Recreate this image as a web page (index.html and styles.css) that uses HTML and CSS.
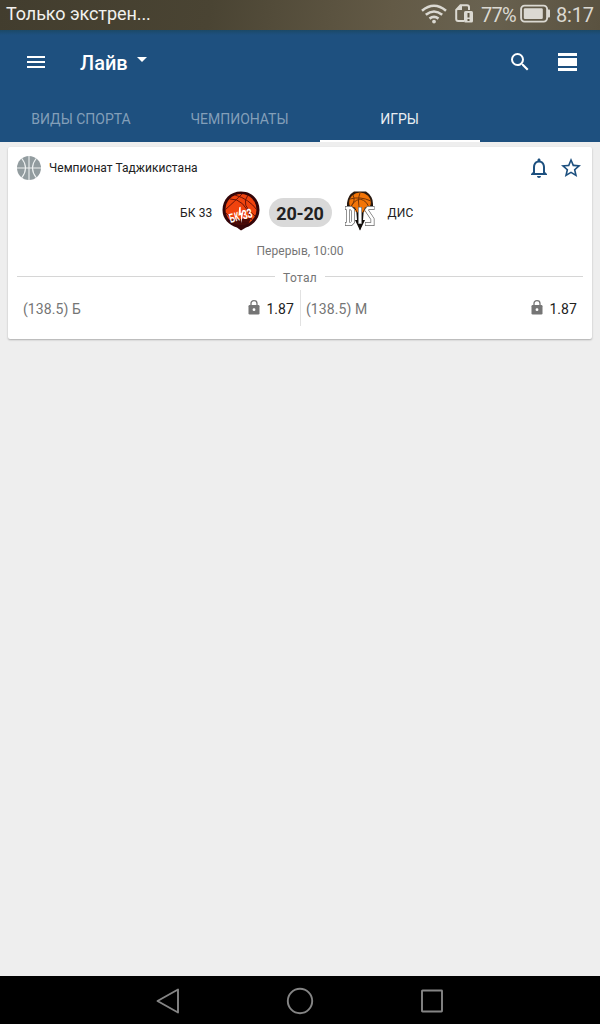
FILE: index.html
```html
<!DOCTYPE html>
<html lang="ru">
<head>
<meta charset="utf-8">
<title>Лайв</title>
<link rel="stylesheet" href="styles.css">
</head>
<body>
<div class="status">
  <span class="carrier">Только экстрен...</span>
  <svg class="wifi" width="26" height="20" viewBox="0 0 26 20" fill="none" stroke="#dbd9d2" stroke-width="2.6"><path d="M1 6.700Q13-3.200 25 6.700M4.800 10.800Q13 4.200 21.200 10.800M8.500 14.600Q13 11.200 17.500 14.600"/><circle cx="13" cy="17.600" r="1.900" fill="#dbd9d2" stroke="none"/></svg>
  <svg class="sim" width="19" height="20" viewBox="0 0 19 20"><path d="M9 17H3.200Q1.200 17 1.200 15V6L5.500 1.200H12Q14 1.200 14 3.200V6" fill="none" stroke="#dbd9d2" stroke-width="2"/><path d="M1.500 5.500L5 1.500H7V6H1.500Z" fill="#dbd9d2"/><rect x="9" y="7" width="9" height="11.500" rx="1.500" fill="#dbd9d2"/><path d="M13.500 9V13.500M13.500 15V17" stroke="#5e5643" stroke-width="2"/></svg>
  <span class="percent">77%</span>
  <svg class="battery" width="31" height="20" viewBox="0 0 31 20"><rect x="1.100" y="1.600" width="26" height="16" rx="3.500" fill="none" stroke="#dbd9d2" stroke-width="1.900"/><rect x="3.800" y="4.200" width="19" height="10.800" rx="1.200" fill="#dbd9d2"/><path d="M28 5.500H29.200Q30 5.500 30 6.500V12.500Q30 13.500 29.200 13.500H28Z" fill="#dbd9d2"/></svg>
  <span class="clock">8:17</span>
</div>
<header class="appbar">
  <div class="toolbar">
    <svg width="18" height="12" viewBox="0 0 18 12" fill="#fff"><path d="M0 0H18V2H0ZM0 5H18V7H0ZM0 10H18V12H0Z"/></svg>
    <h1 class="title">Лайв</h1>
    <svg class="caret" width="10" height="5" viewBox="0 0 10 5"><path d="M0 0H10L5 5Z" fill="#fff"/></svg>
    <svg class="search" width="24" height="24" viewBox="0 0 24 24" fill="#fff"><path d="M15.500 14h-.79l-.28-.27A6.471 6.471 0 0 0 16 9.500 6.500 6.500 0 1 0 9.500 16c1.610 0 3.090-.59 4.230-1.570l.27.28v.79l5 4.990L20.490 19l-4.990-5zm-6 0C7.010 14 5 11.990 5 9.500S7.010 5 9.500 5 14 7.010 14 9.500 11.990 14 9.500 14z"/></svg>
    <svg class="view" width="19" height="18" viewBox="0 0 19 18" fill="#fff"><path d="M0 0H19V3H0ZM0 5H19V13H0ZM0 15H19V18H0Z"/></svg>
  </div>
  <nav class="tabs">
    <span class="tab sports">ВИДЫ СПОРТА</span>
    <span class="tab champs">ЧЕМПИОНАТЫ</span>
    <span class="tab active">ИГРЫ</span>
  </nav>
</header>
<main class="content">
  <article class="card">
    <div class="league">
      <svg width="24" height="24" viewBox="0 0 24 24"><circle cx="12" cy="12" r="12" fill="#929c9f"/><path d="M12 0V24M0 12H24M4.500 2Q12.500 12 4.500 22M19.500 2Q11.500 12 19.500 22" fill="none" stroke="#edf0f0" stroke-width="1.100"/></svg>
      <span class="league-name">Чемпионат Таджикистана</span>
      <svg class="bell" width="24" height="24" viewBox="0 0 24 24" fill="#1d507f"><path d="M12 22c1.100 0 2-.9 2-2h-4c0 1.100.9 2 2 2zm6-6v-5c0-3.070-1.630-5.640-4.500-6.320V4c0-.83-.67-1.500-1.500-1.500s-1.500.67-1.500 1.500v.68C7.640 5.360 6 7.920 6 11v5l-2 2v1h16v-1l-2-2zm-2 1H8v-6c0-2.480 1.510-4.500 4-4.500s4 2.020 4 4.500v6z"/></svg>
      <svg width="24" height="24" viewBox="0 0 24 24" fill="#1d507f"><path d="M22 9.240l-7.190-.62L12 2 9.190 8.630 2 9.240l5.460 4.730L5.820 21 12 17.270 18.180 21l-1.630-7.030L22 9.240zM12 15.400l-3.760 2.270 1-4.280-3.320-2.880 4.380-.38L12 6.100l1.710 4.040 4.380.38-3.320 2.880 1 4.280L12 15.400z"/></svg>
    </div>
    <div class="match">
      <span class="team home">БК 33</span>
      <svg class="logo" width="40" height="40" viewBox="0 0 40 40">
        <path d="M20 .5C31 .5 38.500 8.500 38.500 19C38.500 28 32 34 25 36.500L20 39.500L16 36.500C8 34 1.500 28 1.500 19C1.500 8.500 9 .5 20 .5Z" fill="#330508"/>
        <circle cx="20" cy="18.500" r="15.500" fill="#f0430e"/>
        <path d="M9 8Q23 7 31 29M21 3Q15 9 4 19M14 4Q28 8 36 19M27 4Q19 14 34 25M5 22Q13 33 28 32" fill="none" stroke="#6b1408" stroke-width="1"/>
        <path d="M7 29L30 27Q29 32 24 35L20 39L15 35Q9 33 7 29Z" fill="#3b0708" opacity=".9"/>
        <g transform="translate(9.500 32) rotate(-15)"><text class="logo-text" x="0" y="0" textLength="10" lengthAdjust="spacingAndGlyphs">БК</text><text class="logo-text" x="13.500" y="0" textLength="10" lengthAdjust="spacingAndGlyphs">33</text><path d="M12.500-13L9.500-5H12L10.500 3L15-7H12.500L14-13Z" fill="#fff"/></g>
      </svg>
      <span class="score">20-20</span>
      <svg class="logo" width="40" height="40" viewBox="0 0 40 40">
        <path d="M14 .5H26Q33 5 33 13V17H7V12Q8 4 14 .5Z" fill="#2a1a10"/>
        <ellipse cx="20" cy="11.500" rx="10.800" ry="10" fill="#f27508"/>
        <path d="M10 8Q20 5 31 10M20 2Q17 9 20 20M20 8Q12 10 11 18M20 8Q28 10 29 18M13 4Q16 10 11 15" fill="none" stroke="#753507" stroke-width="1"/>
        <path d="M7 14L16 17L17 29H15L20 39.500L25 29H23L24 17L33 14V19H7Z" fill="#120e0b"/>
        <path d="M15 17H25L22 22H18Z" fill="#f27508"/>
        <g fill="none" stroke="#666" stroke-width="4"><path d="M5 17H11L13 19V31L11 33H5M8 17V33M20 16V33M34.500 17H28L26.500 19L32.500 28V33H25"/></g>
        <g fill="none" stroke="#fff" stroke-width="2.600"><path d="M5.500 17H11L13 19V31L11 33H5.500M8 17V33M20 16.500V32.500M34 17H28L26.500 19L32.500 28V33H25.500"/></g>
        <path d="M18 33L20 39.500L22 33Z" fill="#120e0b"/>
      </svg>
      <span class="team away">ДИС</span>
    </div>
    <div class="period">Перерыв, 10:00</div>
    <div class="market"><span>Тотал</span></div>
    <div class="odds">
      <div class="odd"><span class="line">(138.5) Б</span><svg class="lock" width="12" height="15" viewBox="0 0 12 15"><path d="M3 6V3.500Q3 .7 6 .7Q9 .7 9 3.500V6" fill="none" stroke="#757575" stroke-width="1.300"/><rect x=".5" y="5" width="11" height="9.500" rx="1.200" fill="#757575"/><circle cx="6" cy="9.700" r="1.400" fill="#fff"/></svg><span class="value">1.87</span></div>
      <div class="odd"><span class="line">(138.5) М</span><svg class="lock" width="12" height="15" viewBox="0 0 12 15"><path d="M3 6V3.500Q3 .7 6 .7Q9 .7 9 3.500V6" fill="none" stroke="#757575" stroke-width="1.300"/><rect x=".5" y="5" width="11" height="9.500" rx="1.200" fill="#757575"/><circle cx="6" cy="9.700" r="1.400" fill="#fff"/></svg><span class="value">1.87</span></div>
    </div>
  </article>
</main>
<footer class="navbar">
  <svg width="24" height="26" viewBox="0 0 24 26"><path d="M1.500 13L22 1.500V24.500Z"/></svg>
  <svg width="28" height="28" viewBox="0 0 28 28"><circle cx="14" cy="14" r="12.200"/></svg>
  <svg width="24" height="24" viewBox="0 0 24 24"><rect x="2" y="1.500" width="20" height="21" rx=".5"/></svg>
</footer>
</body>
</html>
```
FILE: styles.css
```css
* { box-sizing: border-box; }
body {
  margin: 0;
  height: 1024px;
  display: flex;
  flex-direction: column;
  background: #eee;
  font-family: Roboto, "Noto Sans", sans-serif;
  color: #212121;
}
svg { display: block; flex: none; }
.status {
  height: 30px;
  flex: none;
  display: flex;
  align-items: center;
  padding: 0 6px;
  background: linear-gradient(100deg, #423d2e 0%, #4a4433 35%, #635a46 65%, #696250 80%, #5a5240 100%);
  color: #dbd9d2;
  white-space: nowrap;
}
.carrier { font-size: 18px; line-height: 28px; color: #f2f1ee; padding-bottom: 2px; letter-spacing: -.08px; }
.wifi { margin: 0 8px 2px auto; }
.sim { margin: 0 7px 2px 0; }
.percent, .clock { font-size: 20px; line-height: 30px; }
.percent { width: 38px; letter-spacing: -.8px; }
.battery { margin: 0 5px 2px 1px; }
.clock { width: 38px; letter-spacing: -.2px; }
.appbar {
  height: 112px;
  flex: none;
  background: linear-gradient(#1b4967, #1e507f 5px);
  color: #fff;
}
.toolbar { height: 64px; display: flex; align-items: center; padding: 0 23px 0 27px; }
.title { margin: 2px 9px 0 35px; font-size: 20px; line-height: 28px; font-weight: 500; }
.caret { margin-bottom: 5px; }
.search { margin-left: auto; margin-right: 26px; }
.tabs { height: 48px; display: grid; grid-template-columns: repeat(3, 160px); }
.tab {
  display: flex;
  align-items: center;
  justify-content: center;
  padding-top: 4px;
  padding-right: 1px;
  border-bottom: 2px solid transparent;
  font-size: 14px;
  color: #839fb9;
}
.sports { padding-right: 0; padding-left: 2px; }
.active { color: #e9eef3; border-color: #fff; }
.content { flex: 1; padding: 5px 8px; }
.card {
  height: 192px;
  padding: 5px 9px 0;
  background: #fff;
  border-radius: 2px;
  box-shadow: 0 1px 2px rgba(0, 0, 0, .28);
}
.league { height: 32px; display: flex; align-items: center; }
.league-name { margin-left: 8px; font-size: 12px; letter-spacing: .04px; }
.bell { margin: 0 8px 0 auto; }
.match {
  height: 54px;
  padding-top: 2px;
  display: grid;
  grid-template-columns: 1fr 40px 63px 40px 1fr;
  column-gap: 8px;
  align-items: center;
  font-size: 12px;
}
.team { padding-top: 2px; letter-spacing: .15px; }
.home { text-align: right; }
.logo { margin-bottom: 2px; }
.logo-text { font: 700 13px "Liberation Sans", sans-serif; fill: #fff; }
.score {
  height: 29px;
  border-radius: 15px;
  background: #d9d9d9;
  font-size: 18px;
  line-height: 31px;
  letter-spacing: -.2px;
  font-weight: 700;
  text-align: center;
}
.period { height: 26px; line-height: 26px; font-size: 12px; letter-spacing: .06px; text-align: center; color: #757575; }
.market {
  height: 26px;
  padding-bottom: 1px;
  display: flex;
  align-items: center;
  gap: 8px;
  color: #757575;
  font-size: 12px;
  letter-spacing: .3px;
}
.market span { padding-top: 3px; }
.market::before, .market::after { content: ""; flex: 1; height: 1px; background: #d6d6d6; }
.odds { height: 36px; display: grid; grid-template-columns: 284px 1fr; }
.odd { display: flex; align-items: center; padding: 2px 6px 0; font-size: 14px; letter-spacing: .08px; }
.odd:first-child { border-right: 1px solid #e2e2e2; }
.odd:last-child { padding-left: 5px; }
.line { color: #757575; }
.lock { margin: 0 6px 4px auto; }
.navbar {
  height: 48px;
  flex: none;
  display: flex;
  align-items: center;
  justify-content: center;
  gap: 106px;
  padding-top: 2px;
  background: #000;
}
.navbar svg { fill: none; stroke: #858585; stroke-width: 1.9; stroke-linejoin: round; }
```
